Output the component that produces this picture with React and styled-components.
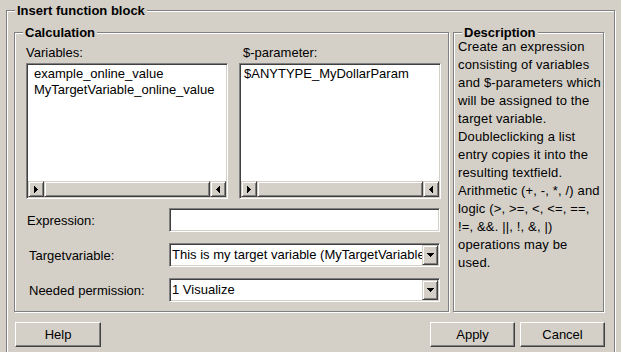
import React from 'react';
import styled, { createGlobalStyle, css } from 'styled-components';

const face = '#d4d0c8';

const GlobalStyle = createGlobalStyle`
  html, body {
    margin: 0;
    padding: 0;
    background: ${face};
  }
  body {
    width: 621px;
    height: 352px;
    overflow: hidden;
    font-family: "Liberation Sans", Arial, sans-serif;
    font-size: 13px;
    color: #000;
  }
  * { box-sizing: border-box; }
`;

const raised = css`
  background: ${face};
  border: 1px solid;
  border-color: ${face} #404040 #404040 ${face};
  box-shadow: inset 1px 1px 0 #fff, inset -1px -1px 0 #808080;
`;

const Dialog = styled.div`
  width: 621px;
  height: 352px;
  overflow: hidden;
  padding: 10px 0 0 6px;
`;

const Group = styled.div`
  position: relative;
  border: 1px solid #808080;
  box-shadow: inset 1px 1px 0 #fff, 1px 1px 0 #fff;
`;

const GroupTitle = styled.span`
  position: absolute;
  top: -8px;
  left: 8px;
  padding: 0 2px;
  background: ${face};
  font-weight: bold;
  line-height: 15px;
  white-space: nowrap;
`;

const OuterGroup = styled(Group)`
  width: 609px;
  height: 360px;
  padding: 21px 10px 0 7px;
`;

const Panels = styled.div`
  display: flex;
  gap: 4px;
  height: 280px;
`;

const CalcGroup = styled(Group)`
  width: 435px;
  padding: 12px 7px 0 11px;
`;

const ListsRow = styled.div`
  display: grid;
  grid-template-columns: 202px 202px;
  column-gap: 11px;
`;

const Label = styled.div`
  height: 15px;
  line-height: 15px;
  padding-left: ${p => p.$indent || 0}px;
  white-space: nowrap;
`;

const Sunken = styled.div`
  background: #fff;
  border: 1px solid;
  border-color: #808080 #fff #fff #808080;
  padding: 1px;
  box-shadow: inset 1px 1px 0 #404040, inset -1px -1px 0 ${face};
`;

const ListBox = styled(Sunken)`
  margin-top: 3px;
  height: 136px;
  display: flex;
  flex-direction: column;
`;

const ListItems = styled.div`
  flex: 1;
  overflow: hidden;
  padding: 1px 0 0 ${p => p.$pad}px;
`;

const ListItem = styled.div`
  line-height: 16px;
  white-space: nowrap;
`;

const HScroll = styled.div`
  display: flex;
  height: 16px;
  background: ${face};
`;

const ScrollButton = styled.div`
  ${raised};
  width: 16px;
  height: 16px;
  display: flex;
  align-items: center;
  justify-content: center;
`;

const Thumb = styled.div`
  ${raised};
  flex: 1;
`;

const Form = styled.div`
  display: grid;
  grid-template-columns: 143px 271px;
  grid-auto-rows: 24px;
  row-gap: 11px;
  align-items: center;
  margin-top: 9px;
`;

const TextField = styled(Sunken)`
  height: 24px;
`;

const Combo = styled(Sunken)`
  height: 24px;
  display: flex;
`;

const ComboText = styled.div`
  flex: 1;
  overflow: hidden;
  white-space: nowrap;
  line-height: 20px;
  padding-left: 1px;
`;

const ComboButton = styled.div`
  ${raised};
  width: 16px;
  height: 20px;
  display: flex;
  align-items: center;
  justify-content: center;
`;

const DescGroup = styled(Group)`
  width: 151px;
  padding: 5px 0 0 4px;
`;

const DescLine = styled.div`
  line-height: 18px;
  letter-spacing: 0.15px;
  white-space: nowrap;
`;

const ButtonRow = styled.div`
  display: flex;
  gap: 5px;
  margin: 10px -1px 0 1px;
`;

const Spacer = styled.div`
  flex: 1;
`;

const Button = styled.button`
  width: ${p => p.$w}px;
  height: 25px;
  padding: 0;
  font: inherit;
  color: #000;
  background: ${face};
  border: 1px solid;
  border-color: #fff #404040 #404040 #fff;
  box-shadow: inset -1px -1px 0 #808080;
`;

const Arrow = ({ dir }) => {
  if (dir === 'down') {
    return (
      <svg width="7" height="4" shapeRendering="crispEdges">
        <rect x="0" y="0" width="7" height="1" />
        <rect x="1" y="1" width="5" height="1" />
        <rect x="2" y="2" width="3" height="1" />
        <rect x="3" y="3" width="1" height="1" />
      </svg>
    );
  }
  const cols = dir === 'left' ? [3, 2, 1, 0] : [0, 1, 2, 3];
  return (
    <svg width="4" height="7" shapeRendering="crispEdges">
      {cols.map((x, i) => (
        <rect key={i} x={x} y={3 - i} width="1" height={i * 2 + 1} />
      ))}
    </svg>
  );
};

const List = ({ label, items, pad, indent }) => (
  <div>
    <Label $indent={indent}>{label}</Label>
    <ListBox>
      <ListItems $pad={pad}>
        {items.map(i => <ListItem key={i}>{i}</ListItem>)}
      </ListItems>
      <HScroll>
        <ScrollButton><Arrow dir="left" /></ScrollButton>
        <Thumb />
        <ScrollButton><Arrow dir="right" /></ScrollButton>
      </HScroll>
    </ListBox>
  </div>
);

const description = [
  'Create an expression',
  'consisting of variables',
  'and $-parameters which',
  'will be assigned to the',
  'target variable.',
  'Doubleclicking a list',
  'entry copies it into the',
  'resulting textfield.',
  'Arithmetic (+, -, *, /) and',
  'logic (>, >=, <, <=, ==,',
  '!=, &&. ||, !, &, |)',
  'operations may be',
  'used.',
];

export default function App() {
  return (
    <>
      <GlobalStyle />
      <Dialog>
        <OuterGroup>
          <GroupTitle>Insert function block</GroupTitle>
          <Panels>
            <CalcGroup>
              <GroupTitle>Calculation</GroupTitle>
              <ListsRow>
                <List
                  label="Variables:"
                  pad={6}
                  items={['example_online_value', 'MyTargetVariable_online_value']}
                />
                <List
                  label="$-parameter:"
                  pad={3}
                  indent={4}
                  items={['$ANYTYPE_MyDollarParam']}
                />
              </ListsRow>
              <Form>
                <Label $indent={1}>Expression:</Label>
                <TextField />
                <Label $indent={3}>Targetvariable:</Label>
                <Combo>
                  <ComboText>This is my target variable (MyTargetVariable_online_value)</ComboText>
                  <ComboButton><Arrow dir="down" /></ComboButton>
                </Combo>
                <Label $indent={3}>Needed permission:</Label>
                <Combo>
                  <ComboText>1 Visualize</ComboText>
                  <ComboButton><Arrow dir="down" /></ComboButton>
                </Combo>
              </Form>
            </CalcGroup>
            <DescGroup>
              <GroupTitle>Description</GroupTitle>
              {description.map(l => <DescLine key={l}>{l}</DescLine>)}
            </DescGroup>
          </Panels>
          <ButtonRow>
            <Button $w={86}>Help</Button>
            <Spacer />
            <Button $w={85}>Apply</Button>
            <Button $w={85}>Cancel</Button>
          </ButtonRow>
        </OuterGroup>
      </Dialog>
    </>
  );
}
